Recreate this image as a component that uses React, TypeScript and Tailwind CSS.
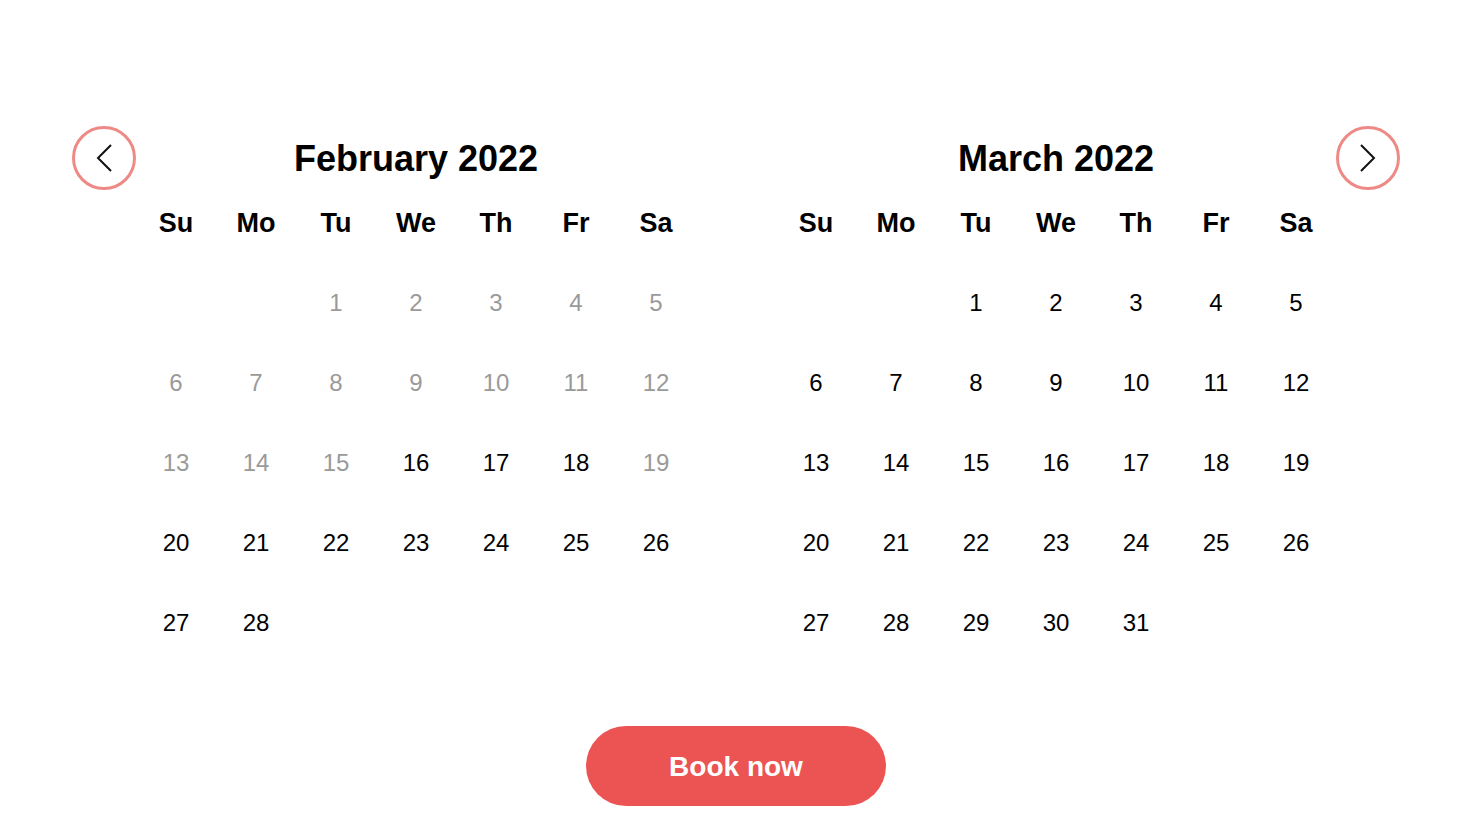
import { useState } from "react"

const DAYS = ["Su", "Mo", "Tu", "We", "Th", "Fr", "Sa"]

interface MonthProps {
  title: string
  offset: number
  total: number
  isDisabled: (d: number) => boolean
}

function Month({ title, offset, total, isDisabled }: MonthProps) {
  const cells: (number | null)[] = []
  for (let i = 0; i < offset; i++) cells.push(null)
  for (let d = 1; d <= total; d++) cells.push(d)

  return (
    <div className="w-[560px] pt-[9px]">
      <h2 className="h-12 text-center text-[36px] font-bold leading-[48px] text-black">{title}</h2>
      <div className="grid grid-cols-7">
        {DAYS.map((d) => (
          <div key={d} className="flex h-20 items-center justify-center text-[27px] font-bold text-black">
            {d}
          </div>
        ))}
        {cells.map((d, i) =>
          d === null ? (
            <div key={"e" + i} className="h-20" />
          ) : (
            <div
              key={d}
              className={
                "flex h-20 items-center justify-center text-[24px] " +
                (isDisabled(d) ? "text-[#9a9a9a]" : "text-black cursor-pointer")
              }
            >
              {d}
            </div>
          )
        )}
      </div>
    </div>
  )
}

function ArrowButton({ dir }: { dir: "left" | "right" }) {
  return (
    <button className="flex h-16 w-16 shrink-0 items-center justify-center rounded-full border-[3px] border-[#ee8a86] bg-white">
      <svg width="18" height="30" viewBox="0 0 18 30" fill="none">
        {dir === "left" ? (
          <path d="M16 2 L3 15 L16 28" stroke="#111" strokeWidth="2" />
        ) : (
          <path d="M2 2 L15 15 L2 28" stroke="#111" strokeWidth="2" />
        )}
      </svg>
    </button>
  )
}

export default function App() {
  const [, setPage] = useState(0)

  return (
    <div
      className="min-h-screen bg-white pt-[126px] pl-[72px]"
      style={{ fontFamily: '"Liberation Sans", Arial, sans-serif' }}
    >
      <div className="flex items-start">
        <div onClick={() => setPage((p) => p - 1)}>
          <ArrowButton dir="left" />
        </div>
        <div className="flex gap-20">
          <Month title="February 2022" offset={2} total={28} isDisabled={(d) => d <= 15 || d === 19} />
          <Month title="March 2022" offset={2} total={31} isDisabled={() => false} />
        </div>
        <div onClick={() => setPage((p) => p + 1)}>
          <ArrowButton dir="right" />
        </div>
      </div>
      <div className="mt-[63px] flex w-[1328px] justify-center">
        <button className="h-20 w-[300px] rounded-full bg-[#ec5453] pt-0.5 text-[28px] font-bold text-white">
          Book now
        </button>
      </div>
    </div>
  )
}
